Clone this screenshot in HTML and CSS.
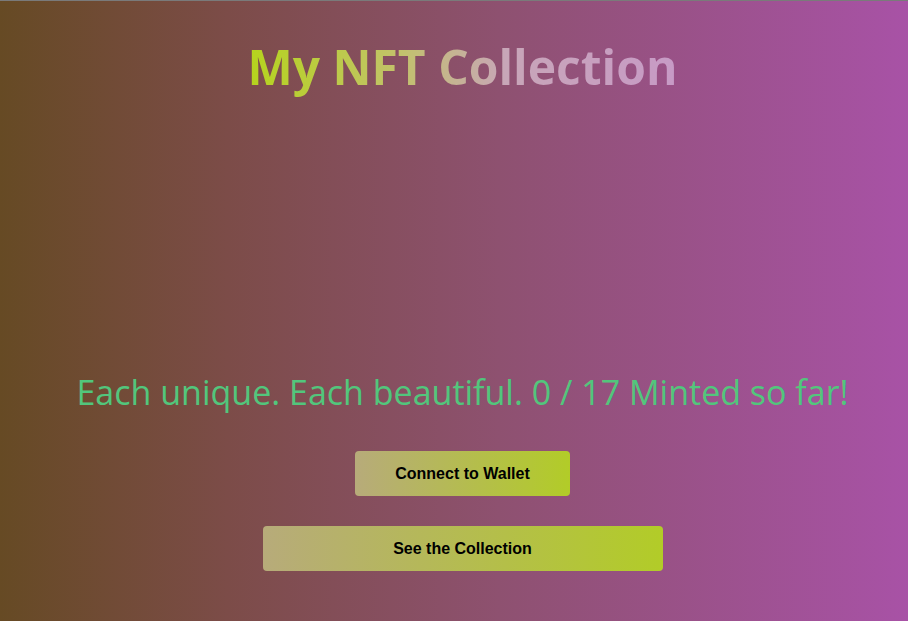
FILE: index.html
```html
<!DOCTYPE html>
<html>
<head>
<meta charset="utf-8">
<link rel="stylesheet" href="styles.css">
</head>
<body>
<div class="app">
  <h1 class="title">My NFT Collection</h1>
  <p class="sub">Each unique. Each beautiful. 0 / 17 Minted so far!</p>
  <button class="btn btn-connect">Connect to Wallet</button>
  <button class="btn btn-see">See the Collection</button>
</div>
</body>
</html>
```
FILE: styles.css
```css
html, body {
  margin: 0;
  padding: 0;
  height: 100%;
}
body {
  background: linear-gradient(to right, #664a24 0%, #7c4c48 25%, #8e5170 55%, #a852a6 100%);
  border-top: 1px solid #7a7a7a;
  box-sizing: border-box;
  overflow: hidden;
}
.app {
  display: flex;
  flex-direction: column;
  align-items: center;
  padding-left: 17px;
  font-family: "Open Sans", "Noto Sans", sans-serif;
}
.title {
  margin: 36px 0 0;
  font-size: 48px;
  font-weight: 700;
  line-height: 60px;
  background: linear-gradient(to right, #b5d41c 0%, #c2c26a 35%, #c8a6b8 60%, #c79ac6 100%);
  -webkit-background-clip: text;
  background-clip: text;
  color: transparent;
}
.sub {
  margin: 273px 0 0;
  font-size: 34px;
  line-height: 44px;
  color: #52c67c;
}
.btn {
  border: none;
  border-radius: 4px;
  height: 45px;
  font-family: "Liberation Sans", Arial, sans-serif;
  font-weight: 700;
  font-size: 16px;
  color: #000;
  background: linear-gradient(to right, #b7ab7a 0%, #b2cc28 100%);
  padding: 0;
}
.btn-connect {
  width: 215px;
  margin-top: 37px;
}
.btn-see {
  width: 400px;
  margin-top: 30px;
}
```
